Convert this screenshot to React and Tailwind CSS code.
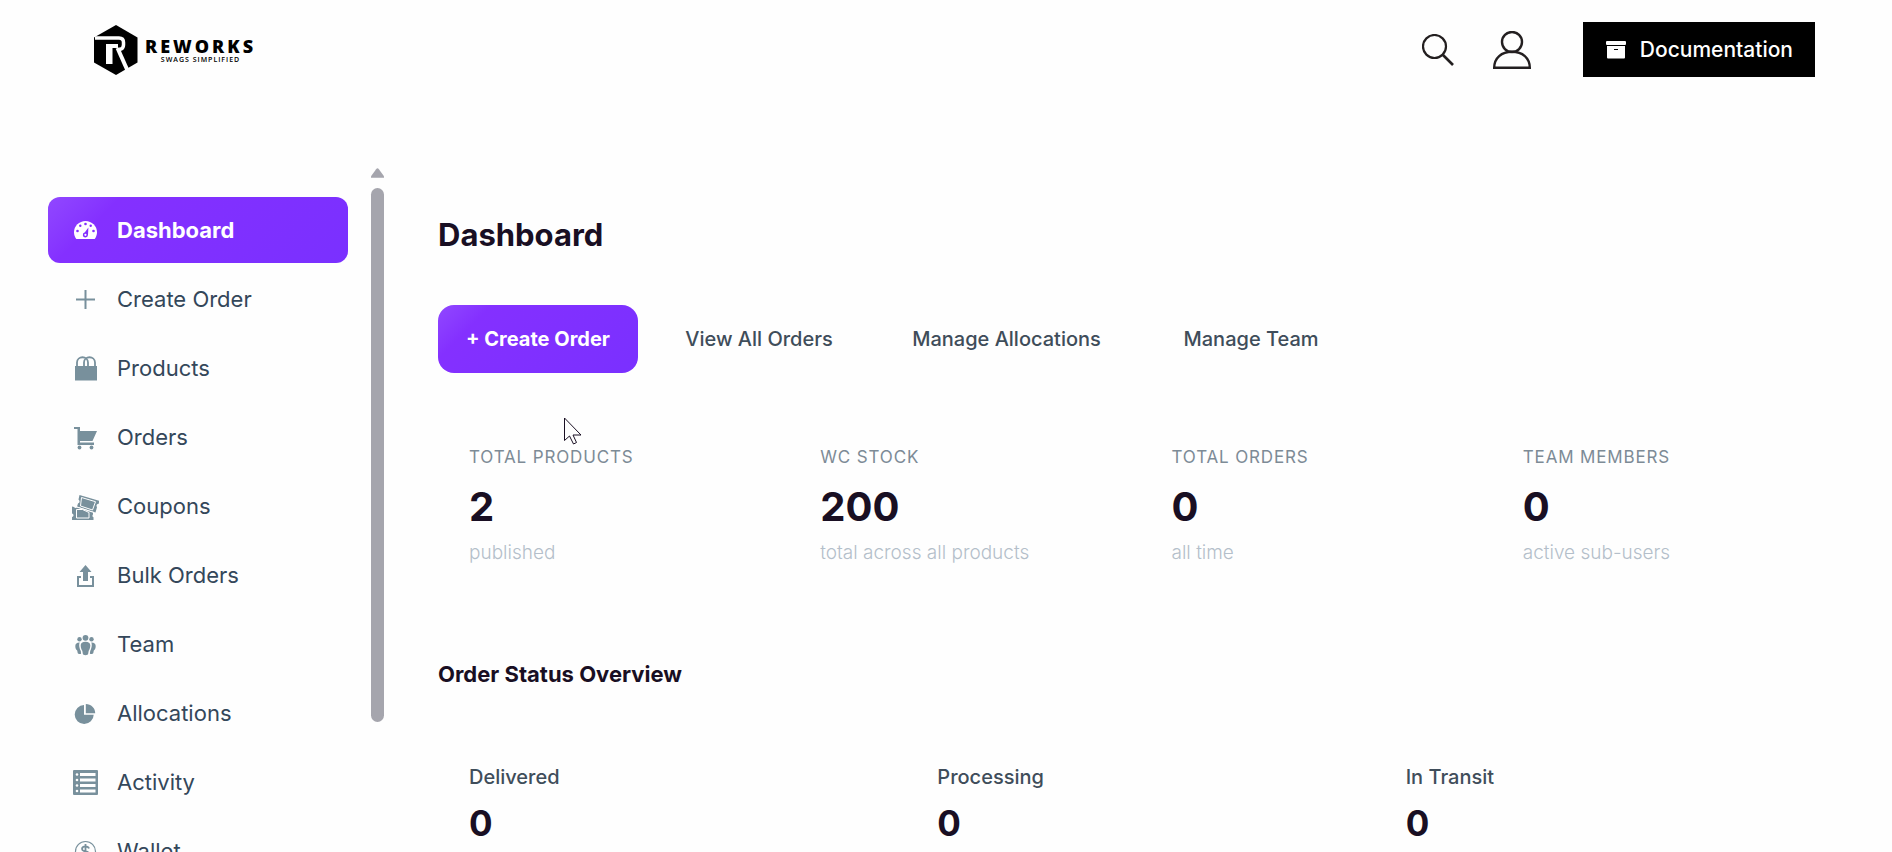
import React from "react";

function GaugeIcon() {
  return (
    <svg viewBox="0 0 28 28" className="w-7 h-7 shrink-0" aria-hidden="true">
      <path
        fill="currentColor"
        d="M14.500 5C8.200 5 3 10 3 16.200c0 2.400.8 4.700 2.300 6.800h18.400c1.500-2.100 2.300-4.400 2.300-6.800C26 10 20.800 5 14.500 5z"
      />
      <g fill="#832fff">
        <circle cx="14.500" cy="8" r="1.300" />
        <circle cx="9.300" cy="9.800" r="1.200" />
        <circle cx="19.700" cy="9.800" r="1.200" />
        <circle cx="6.500" cy="15" r="1.300" />
        <circle cx="22.500" cy="15" r="1.300" />
        <path d="M17.400 11.500l-.4 7.500a2.600 2.600 0 1 1-3.100-2.700z" />
      </g>
      <circle cx="14.400" cy="18.800" r="1.100" fill="currentColor" />
    </svg>
  );
}

function PlusIcon() {
  return (
    <svg viewBox="0 0 28 28" className="w-7 h-7 shrink-0" aria-hidden="true">
      <path fill="currentColor" d="M13.500 5h2v8.500H24v2h-8.500V24h-2v-8.500H5v-2h8.500z" />
    </svg>
  );
}

function BagIcon() {
  return (
    <svg viewBox="0 0 28 28" className="w-7 h-7 shrink-0" aria-hidden="true">
      <path fill="currentColor" d="M4 12h22v14.500H4z" />
      <g fill="none" stroke="currentColor" strokeWidth="1.800">
        <path d="M6 13V8.500c0-7 11-7 11 0V13" />
        <path d="M13 13V8.500c0-7 11-7 11 0V13" />
      </g>
    </svg>
  );
}

function CartIcon() {
  return (
    <svg viewBox="0 0 28 28" className="w-7 h-7 shrink-0" aria-hidden="true">
      <path
        fill="currentColor"
        d="M3 4h6v4h17l-4.500 10H9v1.500h14V22H6.500V6H3z"
      />
      <circle cx="8.500" cy="24.500" r="1.900" fill="currentColor" />
      <circle cx="20.500" cy="24.500" r="1.900" fill="currentColor" />
    </svg>
  );
}

function CouponIcon() {
  return (
    <svg viewBox="0 0 28 28" className="w-7 h-7 shrink-0" aria-hidden="true">
      <path
        fill="currentColor"
        d="M8.500 3l20 6-1 3c-2 0-2.500 1.500-1.500 3.200l-1.500 5.300L6 14.500l1-3c2-.5 2-2.800.5-4z"
      />
      <path fill="none" stroke="#fefefe" strokeWidth="1" d="M10.500 5.500l14 4.200-3 8.300-12-4z" />
      <path
        fill="currentColor"
        d="M1 14.500l2 .6c1 1.200 2 1 3 .2l16 5v2.200c-1 1-.5 2.500.5 2.800v2.700H1v-3c2-.5 2-3 0-3.500z"
      />
      <path fill="none" stroke="#fefefe" strokeWidth="1" d="M5.500 17.500h6l6.500 3v5.500H5.500z" />
      <path fill="none" stroke="#fefefe" strokeWidth="1" d="M4 14.500l19 6" />
    </svg>
  );
}

function UploadIcon() {
  return (
    <svg viewBox="0 0 28 28" className="w-7 h-7 shrink-0" aria-hidden="true">
      <path fill="currentColor" d="M14.500 4l6 7h-3.500v9h-5v-9H8.500z" />
      <path fill="currentColor" d="M6 15h4v2H8v7h13v-7h-2v-2h4v11H6z" />
    </svg>
  );
}

function TeamIcon() {
  return (
    <svg viewBox="0 0 28 28" className="w-7 h-7 shrink-0" aria-hidden="true">
      <g fill="currentColor">
        <circle cx="14.500" cy="7.800" r="2.900" />
        <circle cx="8.500" cy="9.300" r="2.200" />
        <circle cx="20.500" cy="9.300" r="2.200" />
        <path d="M14.500 11.800c3 0 4.800 1.300 4.800 3.500 0 2.800-1 4.700-1.600 5.500l-.6 3.200c-.2.700-1 1.200-2.600 1.200s-2.400-.5-2.600-1.200l-.6-3.200c-.6-.8-1.600-2.700-1.600-5.500 0-2.200 1.800-3.500 4.800-3.500z" />
        <path d="M8.800 12.500c-.9 1.200-.9 5 1 8.500l.3 2.800c-1.500.4-3 .2-3.400-.8l-.5-2.500C4.900 19.500 4.300 18 4.300 16c0-2.200 1.700-3.700 4.500-3.500z" />
        <path d="M20.200 12.500c.9 1.200.9 5-1 8.500l-.3 2.800c1.500.4 3 .2 3.400-.8l.5-2.500c1.300-1 1.900-2.500 1.900-4.500 0-2.200-1.700-3.700-4.500-3.500z" />
      </g>
    </svg>
  );
}

function PieIcon() {
  return (
    <svg viewBox="0 0 28 28" className="w-7 h-7 shrink-0" aria-hidden="true">
      <path fill="currentColor" d="M13 6v9.700h9.700A9.500 9.500 0 1 1 13 6z" />
      <path fill="currentColor" d="M14.800 5c5.200 0 9.400 4 9.400 9.300h-9.400z" />
    </svg>
  );
}

function ActivityIcon() {
  return (
    <svg viewBox="0 0 28 28" className="w-7 h-7 shrink-0" aria-hidden="true">
      <rect x="2" y="2" width="25" height="25" rx="1" fill="currentColor" />
      <path
        fill="#fefefe"
        d="M9 5h15.500v3H9zM9 10.500h15.500v3H9zM9 16h15.500v3H9zM9 21.500h15.500v3H9z"
      />
      <g fill="#fefefe">
        <circle cx="6" cy="6.500" r="1.300" />
        <circle cx="6" cy="12" r="1.300" />
        <circle cx="6" cy="17.500" r="1.300" />
        <circle cx="6" cy="23" r="1.300" />
      </g>
    </svg>
  );
}

function WalletIcon() {
  return (
    <svg viewBox="0 0 28 28" className="w-7 h-7 shrink-0" aria-hidden="true">
      <g fill="none" stroke="currentColor">
        <circle cx="14.500" cy="14.500" r="10" strokeWidth="1.200" />
        <path
          strokeWidth="1.800"
          d="M18 11.500c-.5-1.500-1.800-2.200-3.500-2.200-2 0-3.500 1-3.500 2.600 0 3.700 7.200 1.500 7.200 5.200 0 1.700-1.500 2.700-3.700 2.700-2 0-3.500-.8-3.900-2.500M14.500 7v15"
        />
      </g>
    </svg>
  );
}

const navItems = [
  { label: "Dashboard", icon: GaugeIcon, active: true },
  { label: "Create Order", icon: PlusIcon },
  { label: "Products", icon: BagIcon },
  { label: "Orders", icon: CartIcon },
  { label: "Coupons", icon: CouponIcon },
  { label: "Bulk Orders", icon: UploadIcon },
  { label: "Team", icon: TeamIcon },
  { label: "Allocations", icon: PieIcon },
  { label: "Activity", icon: ActivityIcon },
  { label: "Wallet", icon: WalletIcon },
];

const stats = [
  { label: "Total Products", value: "2", note: "published" },
  { label: "WC Stock", value: "200", note: "total across all products" },
  { label: "Total Orders", value: "0", note: "all time" },
  { label: "Team Members", value: "0", note: "active sub-users" },
];

const statuses = [
  { label: "Delivered", value: "0" },
  { label: "Processing", value: "0" },
  { label: "In Transit", value: "0" },
];

function Logo() {
  return (
    <a href="#" className="flex items-center gap-[7px] text-black">
      <svg viewBox="0 0 44 50" className="w-11 h-[50px]" aria-hidden="true">
        <path d="M22 0l21.500 12.500v25L22 50 0 37.500v-25z" />
        <path
          fill="none"
          stroke="#fefefe"
          strokeWidth="3.500"
          d="M1 13h24q4.500 0 4.500 4.500v2.500q0 4-4 4.500"
        />
        <path fill="#fefefe" d="M12 19h12v4H18.500v16H12z" />
        <path fill="none" stroke="#fefefe" strokeWidth="4" d="M23.500 23l10 22.500" />
      </svg>
      <span className="flex flex-col items-center font-['Open_Sans',sans-serif]">
        <span className="text-[18px] leading-5 font-extrabold tracking-[3px]">REWORKS</span>
        <span className="text-[7px] leading-2 font-semibold tracking-[1px]">
          SWAGS SIMPLIFIED
        </span>
      </span>
    </a>
  );
}

function Header() {
  return (
    <header className="flex items-center justify-between pt-[22px] pl-[94px] pr-[77px]">
      <Logo />
      <div className="flex items-center">
        <button aria-label="Search" className="mr-[39px]">
          <svg viewBox="0 0 32 32" className="w-8 h-8" fill="none" stroke="#231f20">
            <circle cx="12.500" cy="12.500" r="11.500" strokeWidth="2.200" />
            <path d="M21 21l10 10" strokeWidth="2.600" />
          </svg>
        </button>
        <button aria-label="Account" className="mr-[52px]">
          <svg
            viewBox="0 0 38 38"
            className="w-[38px] h-[38px]"
            fill="none"
            stroke="#231f20"
            strokeWidth="2.400"
          >
            <circle cx="19" cy="11" r="10" />
            <path d="M1.200 36.800C1.200 27 8.500 20.800 19 20.800S36.800 27 36.800 36.800z" />
          </svg>
        </button>
        <a
          href="#"
          className="flex items-center gap-[13px] h-[55px] px-[22px] bg-black text-white text-[21px] font-medium"
        >
          <svg viewBox="0 0 22 20" className="w-[22px] h-5" aria-hidden="true">
            <rect x="1" y="1" width="20" height="4" rx="1" fill="#fff" />
            <path fill="#fff" d="M2 6h18v11.500a1 1 0 0 1-1 1H3a1 1 0 0 1-1-1z" />
            <path d="M9 9.500h4" stroke="#000" />
          </svg>
          Documentation
        </a>
      </div>
    </header>
  );
}

function Sidebar() {
  return (
    <aside className="flex shrink-0 gap-[23px] pl-12">
      <nav className="w-[300px] pt-[29px] space-y-[3px]">
        {navItems.map(({ label, icon: Icon, active }) => (
          <a
            key={label}
            href="#"
            className={
              active
                ? "flex items-center gap-[18px] h-[66px] pl-[23px] rounded-xl text-[22px] font-bold text-white bg-linear-135 from-[#9147ff] via-[#8430ff] via-20% to-[#7a30ff]"
                : "flex items-center gap-[18px] h-[66px] pl-[23px] rounded-xl text-[22px] text-[#34475a]"
            }
          >
            <span className={active ? "text-white" : "text-[#78909c]"}>
              <Icon />
            </span>
            {label}
          </a>
        ))}
      </nav>

      {/* Scroll track */}
      <div className="flex flex-col items-center gap-2.5">
        <svg viewBox="0 0 14 10" className="w-[13px] h-2.5 shrink-0" aria-hidden="true">
          <path fill="#a5a5ad" d="M5.500 1q1.500-2 3 0L14 8.500V10H0V8.500z" />
        </svg>
        <div className="w-[13px] h-[78%] rounded-full bg-[#a5a5ad]"></div>
      </div>
    </aside>
  );
}

function Cursor() {
  return (
    <svg
      viewBox="0 0 20 28"
      className="absolute left-[125px] top-[112px] w-5 h-7"
      aria-hidden="true"
    >
      <path
        fill="#fefefe"
        stroke="#190f23"
        d="M1.500 1v22.500l5-4.500 4 8 3-1.500-3.500-7.500h8z"
      />
    </svg>
  );
}

export default function App() {
  return (
    <div className="flex flex-col h-screen overflow-hidden bg-[#fefefe] font-['Inter','Liberation_Sans',sans-serif]">
      <Header />

      <div className="flex flex-1 min-h-0 mt-[91px]">
        <Sidebar />

        <main className="flex-1 pl-[54px] pr-[73px] pt-[47px]">
          <h1 className="text-[31px] leading-10 font-bold text-[#190f23]">Dashboard</h1>

          {/* Quick actions */}
          <div className="relative flex gap-[19px] mt-[50px] text-[20px] font-medium text-[#3f4d5a]">
            <button className="w-[200px] h-[68px] rounded-2xl font-bold text-white bg-linear-135 from-[#9147ff] via-[#8430ff] via-20% to-[#7a30ff]">
              + Create Order
            </button>
            <button className="w-[204px] h-[68px]">View All Orders</button>
            <button className="w-[253px] h-[68px]">Manage Allocations</button>
            <button className="w-[198px] h-[68px]">Manage Team</button>
            <Cursor />
          </div>

          {/* Totals */}
          <div className="grid grid-cols-4 gap-6 mt-[72px]">
            {stats.map((stat) => (
              <div key={stat.label} className="pl-[31px]">
                <p className="text-[17px] leading-6 uppercase tracking-wider text-[#7d8b96]">
                  {stat.label}
                </p>
                <p className="mt-3 text-[40px] leading-[52px] font-bold text-[#190f23]">
                  {stat.value}
                </p>
                <p className="mt-2 text-[19px] leading-6 font-light text-[#b4bfca]">
                  {stat.note}
                </p>
              </div>
            ))}
          </div>

          {/* Order status */}
          <h2 className="mt-[93px] text-[22px] leading-8 font-bold text-[#190f23]">
            Order Status Overview
          </h2>
          <div className="grid grid-cols-3 gap-6 mt-[75px]">
            {statuses.map((status) => (
              <div key={status.label} className="pl-[31px]">
                <p className="text-[20px] leading-6 font-medium text-[#3f4d5a]">
                  {status.label}
                </p>
                <p className="mt-3 text-[35px] leading-11 font-bold text-[#190f23]">
                  {status.value}
                </p>
              </div>
            ))}
          </div>
        </main>
      </div>
    </div>
  );
}
